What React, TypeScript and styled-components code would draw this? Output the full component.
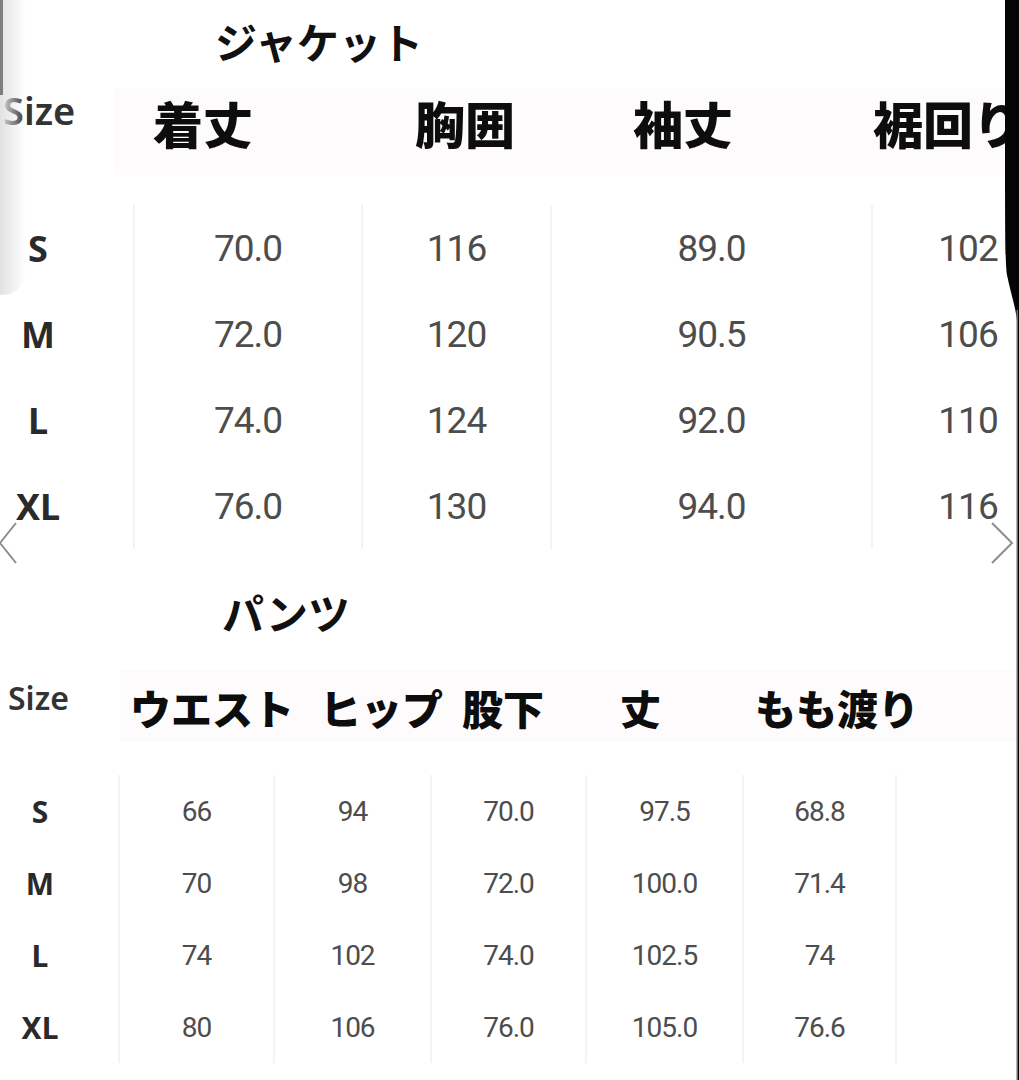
import React from "react";
import styled, { createGlobalStyle } from "styled-components";

type SizeTable = {
  title: string;
  headers: string[];
  rows: string[][];
};

const jacket: SizeTable = {
  title: "ジャケット",
  headers: ["着丈", "胸囲", "袖丈", "裾回り"],
  rows: [
    ["S", "70.0", "116", "89.0", "102"],
    ["M", "72.0", "120", "90.5", "106"],
    ["L", "74.0", "124", "92.0", "110"],
    ["XL", "76.0", "130", "94.0", "116"],
  ],
};

const pants: SizeTable = {
  title: "パンツ",
  headers: ["ウエスト", "ヒップ", "股下", "丈", "もも渡り"],
  rows: [
    ["S", "66", "94", "70.0", "97.5", "68.8"],
    ["M", "70", "98", "72.0", "100.0", "71.4"],
    ["L", "74", "102", "74.0", "102.5", "74"],
    ["XL", "80", "106", "76.0", "105.0", "76.6"],
  ],
};

const GlobalStyle = createGlobalStyle`
  html, body {
    margin: 0;
    padding: 0;
    background: #ffffff;
  }
  body {
    width: 1019px;
    height: 1080px;
    overflow: hidden;
  }
`;

const cjk = `"Noto Sans CJK JP", "Noto Sans", sans-serif`;
const digits = `Roboto, "Liberation Sans", sans-serif`;

const App: React.FC = () => {
  const renderBody = (
    table: SizeTable,
    sizeWidth: number,
    sizeGap: number,
    widths: number[],
    rowHeight: number,
    labelSize: number,
    valueSize: number,
    closed: boolean
  ) => {
    return (
      <Body>
        <SizeColumn width={sizeWidth} gap={sizeGap}>
          {table.rows.map((row) => (
            <SizeCell key={row[0]} height={rowHeight} size={labelSize}>
              {row[0]}
            </SizeCell>
          ))}
        </SizeColumn>
        {widths.map((w, i) => (
          <DataColumn key={i} width={w} closed={closed && i === widths.length - 1}>
            {table.rows.map((row) => (
              <ValueCell key={row[0]} height={rowHeight} size={valueSize}>
                {row[i + 1]}
              </ValueCell>
            ))}
          </DataColumn>
        ))}
      </Body>
    );
  };

  return (
    <Sheet>
      <GlobalStyle />

      <Section>
        <Title height={82} indent={215} top={0}>
          {jacket.title}
        </Title>
        <HeaderRow height={87} below={30} top={6}>
          <SizeHead width={115} indent={3} size={38} line={44}>
            Size
          </SizeHead>
          <HeadBand columns="262px 218px 240px 1fr" indent={38} lift={20}>
            {jacket.headers.map((h) => (
              <HeadCell key={h} size={50}>
                {h}
              </HeadCell>
            ))}
          </HeadBand>
        </HeaderRow>
        {renderBody(jacket, 133, 57, [228, 189, 321, 192], 86, 36, 37, false)}
      </Section>

      <Section>
        <Title height={121} indent={222} top={5}>
          {pants.title}
        </Title>
        <HeaderRow height={72} below={33} top={0}>
          <SizeHead width={120} indent={8} size={32} line={56}>
            Size
          </SizeHead>
          <HeadBand columns="190px 142px 158px 135px 1fr" indent={10} lift={-2}>
            {pants.headers.map((h) => (
              <HeadCell key={h} size={41}>
                {h}
              </HeadCell>
            ))}
          </HeadBand>
        </HeaderRow>
        {renderBody(pants, 118, 38, [155, 157, 155, 157, 155], 72, 30, 28, true)}
      </Section>

      <LeftShade />
      <LeftStrip />

      <Chevron side="left" viewBox="0 0 18 44" width="18" height="44">
        <polyline points="16,2 0,22 16,42" />
      </Chevron>
      <Chevron side="right" viewBox="0 0 24 44" width="24" height="44">
        <polyline points="2,2 22,22 2,42" />
      </Chevron>

      <PhoneEdge viewBox="0 0 20 1080" width="20" height="1080">
        <path d="M6 0 H20 V1080 H19 V330 C18 310 12 295 8 275 C6 262 6 240 6 0 Z" fill="#050505" />
        <rect x="17.5" y="310" width="1.5" height="770" fill="#6a6a6a" />
      </PhoneEdge>
    </Sheet>
  );
};

export default App;

const Sheet = styled.div`
  position: relative;
  width: 1019px;
  height: 1080px;
  overflow: hidden;
  background: #ffffff;
`;

const Section = styled.div`
  display: flex;
  flex-direction: column;
`;

const Title = styled.div<{ height: number; indent: number; top: number }>`
  box-sizing: border-box;
  height: ${(p) => p.height}px;
  padding-left: ${(p) => p.indent}px;
  padding-top: ${(p) => p.top}px;
  display: flex;
  align-items: center;
  font-family: ${cjk};
  font-size: 42px;
  font-weight: 600;
  color: #111111;
  line-height: 1;
`;

const HeaderRow = styled.div<{ height: number; below: number; top: number }>`
  display: flex;
  align-items: flex-start;
  height: ${(p) => p.height}px;
  margin-top: ${(p) => p.top}px;
  margin-bottom: ${(p) => p.below}px;
`;

const SizeHead = styled.div<{ width: number; indent: number; size: number; line: number }>`
  box-sizing: border-box;
  flex: 0 0 ${(p) => p.width}px;
  padding-left: ${(p) => p.indent}px;
  font-family: "Noto Sans", "Open Sans", sans-serif;
  font-weight: 600;
  font-size: ${(p) => p.size}px;
  line-height: ${(p) => p.line}px;
  color: #333333;
`;

const HeadBand = styled.div<{ columns: string; indent: number; lift: number }>`
  box-sizing: border-box;
  flex: 1;
  height: 100%;
  display: grid;
  grid-template-columns: ${(p) => p.columns};
  align-items: center;
  padding-left: ${(p) => p.indent}px;
  padding-bottom: ${(p) => Math.max(p.lift, 0)}px;
  padding-top: ${(p) => Math.max(-p.lift, 0)}px;
  background: #fefbfc;
`;

const HeadCell = styled.div<{ size: number }>`
  font-family: ${cjk};
  font-weight: 900;
  font-size: ${(p) => p.size}px;
  line-height: 1;
  color: #0d0d0d;
  white-space: nowrap;
`;

const Body = styled.div`
  display: flex;
`;

const SizeColumn = styled.div<{ width: number; gap: number }>`
  box-sizing: border-box;
  flex: 0 0 ${(p) => p.width}px;
  padding-right: ${(p) => p.gap}px;
  display: flex;
  flex-direction: column;
`;

const DataColumn = styled.div<{ width: number; closed: boolean }>`
  box-sizing: border-box;
  flex: 0 0 ${(p) => p.width}px;
  display: flex;
  flex-direction: column;
  border-left: 2px solid #f3f3f3;
  border-right: ${(p) => (p.closed ? "2px solid #f3f3f3" : "none")};
`;

const SizeCell = styled.div<{ height: number; size: number }>`
  height: ${(p) => p.height}px;
  display: flex;
  align-items: center;
  justify-content: center;
  font-family: "Noto Sans", "Open Sans", sans-serif;
  font-weight: 700;
  font-size: ${(p) => p.size}px;
  color: #2a2a2a;
`;

const ValueCell = styled.div<{ height: number; size: number }>`
  height: ${(p) => p.height}px;
  display: flex;
  align-items: center;
  justify-content: center;
  font-family: ${digits};
  font-weight: 400;
  font-size: ${(p) => p.size}px;
  letter-spacing: -1px;
  color: #4d4d4d;
`;

const LeftShade = styled.div`
  position: absolute;
  left: 0;
  top: 0;
  width: 26px;
  height: 295px;
  border-bottom-right-radius: 24px;
  background: linear-gradient(to right, #e2e2e2, rgba(255, 255, 255, 0));
`;

const LeftStrip = styled.div`
  position: absolute;
  left: 0;
  top: 0;
  width: 3px;
  height: 95px;
  background: #7d7d7d;
`;

const Chevron = styled.svg<{ side: "left" | "right" }>`
  position: absolute;
  top: 521px;
  left: ${(p) => (p.side === "left" ? "0px" : "990px")};
  fill: none;
  stroke: #8c8c8c;
  stroke-width: 2;
`;

const PhoneEdge = styled.svg`
  position: absolute;
  top: 0;
  right: 0;
`;
